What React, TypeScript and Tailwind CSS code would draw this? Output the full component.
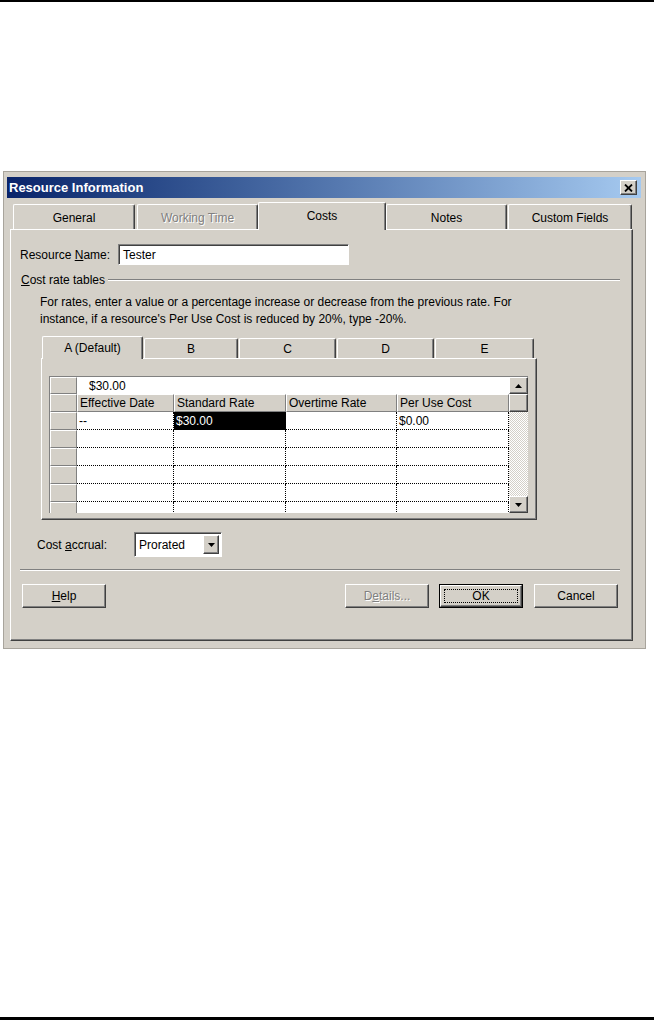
import React from "react";

const raised =
  "border border-t-white border-l-white border-r-[#404040] border-b-[#404040] shadow-[inset_-1px_-1px_0_#808080]";
const sunken =
  "border border-t-[#808080] border-l-[#808080] border-r-white border-b-white shadow-[inset_1px_1px_0_#404040]";
const headCell =
  "h-full bg-[#d4d0c8] border border-t-white border-l-white border-r-[#808080] border-b-[#808080]";

function Tab({ label, w, selected, disabled }: { label: string; w: string; selected?: boolean; disabled?: boolean }) {
  return (
    <div
      className={`${w} ${
        selected ? "h-[28px] -mb-px z-10 pb-[1px]" : "h-[25px] pt-[2px]"
      } relative flex items-center justify-center bg-[#d4d0c8] rounded-t-[2px] border-t border-l border-white border-r border-r-[#404040] shadow-[inset_-1px_0_0_#808080]`}
    >
      <span className={disabled ? "text-[#808080] [text-shadow:1px_1px_0_#ffffff]" : "text-black"}>{label}</span>
    </div>
  );
}

function InnerTab({ label, w, selected }: { label: string; w: string; selected?: boolean }) {
  return (
    <div
      className={`${w} ${
        selected ? "h-[23px] -mb-px z-10 pb-[1px]" : "h-[20px] pt-[1px]"
      } relative flex items-center justify-center bg-[#d4d0c8] rounded-t-[2px] border-t border-l border-white border-r border-r-[#404040] shadow-[inset_-1px_0_0_#808080]`}
    >
      {label}
    </div>
  );
}

function Button({ children, w, isDefault, disabled }: { children: React.ReactNode; w: string; isDefault?: boolean; disabled?: boolean }) {
  return (
    <div className={`${w} h-[24px] ${isDefault ? "border border-black" : ""}`}>
      <div className={`h-full w-full flex items-center justify-center bg-[#d4d0c8] ${raised}`}>
        {isDefault ? (
          <div className="w-[calc(100%-6px)] h-[calc(100%-6px)] border border-dotted border-black flex items-center justify-center">
            {children}
          </div>
        ) : (
          <span className={disabled ? "text-[#808080] [text-shadow:1px_1px_0_#ffffff]" : ""}>{children}</span>
        )}
      </div>
    </div>
  );
}

function Arrow({ up }: { up?: boolean }) {
  return (
    <svg width="7" height="4" viewBox="0 0 7 4">
      {up ? <path d="M3.5 0 L7 4 L0 4 Z" fill="#000" /> : <path d="M0 0 L7 0 L3.5 4 Z" fill="#000" />}
    </svg>
  );
}

const cols = ["w-[97px]", "w-[112px]", "w-[111px]", "w-[112px]"];
const rows: string[][] = [
  ["--", "$30.00", "", "$0.00"],
  ["", "", "", ""],
  ["", "", "", ""],
  ["", "", "", ""],
  ["", "", "", ""],
  ["", "", "", ""],
];

export default function App() {
  return (
    <div className="w-[654px] h-[1020px] bg-white flex flex-col text-[12px] text-black font-['Liberation_Sans',Arial,sans-serif] leading-none">
      <div className="h-[2px] bg-black" />

      {/* Dialog */}
      <div className="mt-[169px] ml-[3px] w-[643px] h-[478px] bg-[#d4d0c8] border border-[#a8a49c] pt-[5px] pl-[3px] pr-[4px] flex flex-col">
        {/* Title bar */}
        <div className="h-[21px] bg-linear-to-r from-[#0a246a] to-[#a6caf0] flex items-center justify-between pl-[2px] pr-[4px]">
          <span className="text-white font-bold text-[13px]">Resource Information</span>
          <div className={`w-[17px] h-[15px] bg-[#d4d0c8] flex items-center justify-center ${raised}`}>
            <svg width="9" height="8" viewBox="0 0 9 8">
              <path d="M1 0.5 L8 7.5 M8 0.5 L1 7.5" stroke="#000" strokeWidth="1.8" />
            </svg>
          </div>
        </div>

        <div className="pl-[3px] flex flex-col">
          {/* Tabs */}
          <div className="h-[31px] flex items-end pl-[3px]">
            <Tab label="General" w="w-[122px]" />
            <div className="w-[2px]" />
            <Tab label="Working Time" w="w-[121px]" disabled />
            <Tab label="Costs" w="w-[128px]" selected />
            <Tab label="Notes" w="w-[121px]" />
            <div className="w-[1px]" />
            <Tab label="Custom Fields" w="w-[124px]" />
          </div>

          {/* Panel */}
          <div className="w-[623px] h-[412px] border-t border-l border-white border-r border-b border-r-[#404040] border-b-[#404040] shadow-[inset_-1px_-1px_0_#808080] flex flex-col">
            <div className="mt-[14px] ml-[9px] flex items-center">
              <span className="w-[98px]">
                Resource <u>N</u>ame:
              </span>
              <div className={`w-[231px] h-[21px] bg-white flex items-center pl-[4px] ${sunken}`}>Tester</div>
            </div>

            <div className="mt-[9px] ml-[10px] mr-[12px] flex items-center">
              <span>
                <u>C</u>ost rate tables
              </span>
              <div className="flex-1 ml-[3px] h-[2px] border-t border-[#808080] border-b border-b-white" />
            </div>

            <p className="mt-[8px] ml-[29px] leading-[17px]">
              For rates, enter a value or a percentage increase or decrease from the previous rate. For
              <br />
              instance, if a resource's Per Use Cost is reduced by 20%, type -20%.
            </p>

            {/* Inner tabs */}
            <div className="ml-[30px] flex flex-col">
              <div className="h-[30px] flex items-end pl-[1px] gap-[1px]">
                <InnerTab label="A (Default)" w="w-[101px]" selected />
                <InnerTab label="B" w="w-[94px]" />
                <InnerTab label="C" w="w-[97px]" />
                <InnerTab label="D" w="w-[97px]" />
                <InnerTab label="E" w="w-[99px]" />
              </div>
              <div className="w-[496px] h-[162px] border-t border-l border-white border-r border-b border-r-[#404040] border-b-[#404040] shadow-[inset_-1px_-1px_0_#808080] pt-[17px] pl-[7px]">
                {/* Grid */}
                <div className="w-[479px] h-[137px] border-t border-l border-[#808080] flex overflow-hidden">
                  <div className="w-[459px] flex flex-col">
                    <div className="h-[17px] flex shrink-0">
                      <div className={`w-[27px] ${headCell}`} />
                      <div className="flex-1 bg-white flex items-center pl-[12px]">$30.00</div>
                    </div>
                    <div className="h-[18px] flex shrink-0">
                      <div className={`w-[27px] ${headCell}`} />
                      {["Effective Date", "Standard Rate", "Overtime Rate", "Per Use Cost"].map((h, i) => (
                        <div key={h} className={`${cols[i]} ${headCell} flex items-center pl-[2px]`}>
                          {h}
                        </div>
                      ))}
                    </div>
                    {rows.map((r, ri) => (
                      <div key={ri} className="h-[18px] flex shrink-0">
                        <div className={`w-[27px] ${headCell}`} />
                        {r.map((c, ci) => (
                          <div
                            key={ci}
                            className={`${cols[ci]} h-full border-r border-b border-dotted border-black flex items-center pl-[2px] ${
                              ri === 0 && ci === 1 ? "bg-black text-white" : "bg-white"
                            }`}
                          >
                            {c}
                          </div>
                        ))}
                      </div>
                    ))}
                  </div>
                  {/* Scrollbar */}
                  <div className="w-[19px] flex flex-col">
                    <div className={`h-[17px] bg-[#d4d0c8] flex items-center justify-center ${raised}`}>
                      <Arrow up />
                    </div>
                    <div className={`h-[18px] bg-[#d4d0c8] ${raised}`} />
                    <div className="flex-1 bg-[repeating-conic-gradient(#d4d0c8_0_25%,#ffffff_0_50%)] bg-[length:2px_2px]" />
                    <div className={`h-[17px] bg-[#d4d0c8] flex items-center justify-center ${raised}`}>
                      <Arrow />
                    </div>
                  </div>
                </div>
              </div>
            </div>

            {/* Cost accrual */}
            <div className="mt-[12px] ml-[26px] flex items-center">
              <span className="w-[97px]">
                Cost <u>a</u>ccrual:
              </span>
              <div className={`w-[88px] h-[25px] bg-white flex items-center justify-between pl-[4px] pr-[2px] ${sunken}`}>
                <span>Prorated</span>
                <div className={`w-[16px] h-[19px] bg-[#d4d0c8] flex items-center justify-center ${raised}`}>
                  <Arrow />
                </div>
              </div>
            </div>

            <div className="mt-[12px] ml-[9px] mr-[12px] h-[2px] border-t border-[#808080] border-b border-b-white" />

            {/* Buttons */}
            <div className="mt-[13px] ml-[11px] mr-[14px] flex items-center">
              <Button w="w-[84px]">
                <u>H</u>elp
              </Button>
              <div className="flex-1" />
              <Button w="w-[84px]" disabled>
                D<u>e</u>tails...
              </Button>
              <div className="w-[10px]" />
              <Button w="w-[84px]" isDefault>
                OK
              </Button>
              <div className="w-[11px]" />
              <Button w="w-[84px]">Cancel</Button>
            </div>
          </div>
        </div>
      </div>

      <div className="flex-1" />
      <div className="h-[3px] bg-black" />
    </div>
  );
}
